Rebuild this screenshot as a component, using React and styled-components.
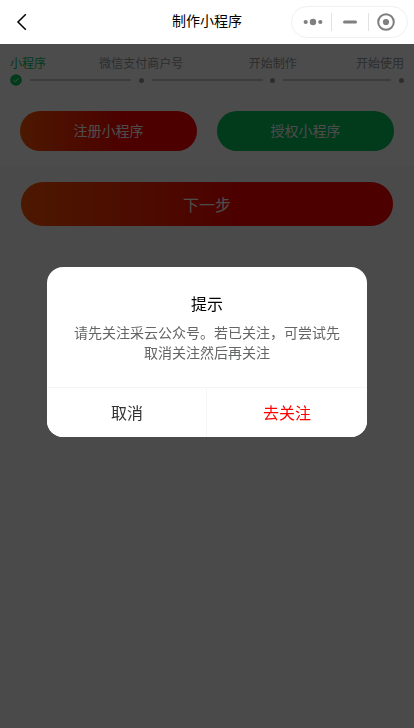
import React from "react";
import styled, { createGlobalStyle } from "styled-components";

const GlobalStyle = createGlobalStyle`
  * { box-sizing: border-box; }
  body {
    margin: 0;
    background: #f7f7f7;
    font-family: "Noto Sans CJK SC", sans-serif;
    font-weight: 400;
    overflow: hidden;
  }
  button { font-family: inherit; font-weight: inherit; border: 0; padding: 0; }
`;

const Page = styled.div`
  height: 728px;
  display: flex;
  flex-direction: column;
`;

const NavBar = styled.header`
  height: 44px;
  flex: none;
  display: grid;
  grid-template-columns: 123px 1fr 123px;
  align-items: center;
  background: #fff;
`;

const BackButton = styled.button`
  width: 24px;
  height: 24px;
  margin-left: 10px;
  background: none;
  svg { display: block; }
`;

const NavTitle = styled.h1`
  margin: 0;
  text-align: center;
  font-size: 14px;
  line-height: 20px;
  font-weight: 400;
  color: #000;
  padding-bottom: 4px;
`;

const Capsule = styled.div`
  width: 117px;
  height: 32px;
  border: 1px solid #f0f0f0;
  border-radius: 16px;
  display: grid;
  grid-template-columns: 39px 37px 39px;
  align-items: center;
`;

const CapsuleItem = styled.div`
  height: 18px;
  display: flex;
  align-items: center;
  justify-content: center;
  padding: 0 ${(p) => p.$right || 0}px 0 ${(p) => p.$left || 0}px;
  border-left: ${(p) => (p.$divided ? "1px solid #e2e2e2" : "0")};
`;

const Body = styled.main`
  flex: 1;
  background: #f7f7f7;
`;

const Panel = styled.section`
  height: 122px;
  background: #fff;
`;

const StepLabels = styled.div`
  display: flex;
  justify-content: space-between;
  padding: 11px 10px 0;
  height: 29px;
`;

const StepLabel = styled.span`
  font-size: 12px;
  line-height: 16px;
  color: ${(p) => (p.$active ? "#07c160" : "#969799")};
  margin-left: ${(p) => p.$shift || 0}px;
`;

const StepTrack = styled.div`
  display: flex;
  align-items: center;
  height: 14px;
  padding: 0 9px 0 10px;
`;

const StepDot = styled.i`
  flex: none;
  width: 5px;
  height: 5px;
  border-radius: 50%;
  background: #969799;
`;

const StepLine = styled.i`
  flex: none;
  width: ${(p) => p.$width}px;
  height: 2px;
  margin: 0 ${(p) => p.$after}px 0 ${(p) => p.$before}px;
  background: #c8c9cc;
`;

const Actions = styled.div`
  display: grid;
  grid-template-columns: 177px 177px;
  gap: 20px;
  padding: 24px 20px 0;
`;

const PillButton = styled.button`
  height: 40px;
  border-radius: 20px;
  padding-bottom: 2px;
  font-size: 14px;
  line-height: 38px;
  color: #fff;
  background: ${(p) => (p.$green ? "#07c160" : "linear-gradient(90deg, #ff5200 0%, #ff0000 62%)")};
`;

const NextButton = styled.button`
  display: block;
  width: 372px;
  height: 44px;
  margin: 16px 0 0 21px;
  border-radius: 22px;
  font-size: 16px;
  line-height: 44px;
  color: #fff;
  background: linear-gradient(90deg, #ff5200 0%, #ff0000 62%);
`;

const Overlay = styled.div`
  position: fixed;
  inset: 44px 0 0;
  background: rgba(0, 0, 0, 0.7);
`;

const Dialog = styled.div`
  position: fixed;
  top: 267px;
  left: 47px;
  width: 320px;
  height: 170px;
  border-radius: 16px;
  overflow: hidden;
  background: #fff;
  display: flex;
  flex-direction: column;
`;

const DialogTitle = styled.h2`
  margin: 0;
  padding-top: 24px;
  font-size: 16px;
  line-height: 24px;
  font-weight: 400;
  text-align: center;
  color: #000;
`;

const DialogMessage = styled.p`
  flex: 1;
  margin: 0;
  padding: 7px 24px 0;
  font-size: 14px;
  line-height: 20px;
  text-align: center;
  color: #646566;
`;

const DialogFooter = styled.div`
  height: 50px;
  display: grid;
  grid-template-columns: 1fr 1fr;
  border-top: 1px solid #f5f5f5;
`;

const DialogButton = styled.button`
  background: #fff;
  padding: 0 0 2px ${(p) => (p.$confirm ? 0 : 1)}px;
  font-size: 16px;
  line-height: 24px;
  color: ${(p) => (p.$confirm ? "#ff0000" : "#323233")};
  border-right: ${(p) => (p.$confirm ? "0" : "1px solid #f5f5f5")};
`;

export default function App() {
  return (
    <Page>
      <GlobalStyle />
      <NavBar>
        <BackButton aria-label="返回">
          <svg width="24" height="24" viewBox="0 0 24 24" fill="none" stroke="#000" strokeWidth="1.5">
            <path d="M15.8 4.2 8 12l7.8 7.8" />
          </svg>
        </BackButton>
        <NavTitle>制作小程序</NavTitle>
        <Capsule>
          <CapsuleItem $left={3}>
            <svg width="20" height="8" viewBox="0 0 20 8" fill="#7f7f7f">
              <circle cx="2.7" cy="4" r="2.1" />
              <circle cx="10" cy="4" r="3.2" />
              <circle cx="17.3" cy="4" r="2.1" />
            </svg>
          </CapsuleItem>
          <CapsuleItem $divided $right={1}>
            <svg width="14" height="4" viewBox="0 0 14 4">
              <rect y="0.5" width="14" height="3" rx="1.5" fill="#7f7f7f" />
            </svg>
          </CapsuleItem>
          <CapsuleItem $divided $right={4}>
            <svg width="18" height="18" viewBox="0 0 18 18">
              <circle cx="9" cy="9" r="7.8" fill="none" stroke="#7f7f7f" strokeWidth="2" />
              <circle cx="9" cy="9" r="3.1" fill="#7f7f7f" />
            </svg>
          </CapsuleItem>
        </Capsule>
      </NavBar>
      <Body>
        <Panel>
          <StepLabels>
            <StepLabel $active>小程序</StepLabel>
            <StepLabel>微信支付商户号</StepLabel>
            <StepLabel $shift={12}>开始制作</StepLabel>
            <StepLabel $shift={6}>开始使用</StepLabel>
          </StepLabels>
          <StepTrack>
            <svg width="12" height="12" viewBox="0 0 12 12">
              <circle cx="6" cy="6" r="5.8" fill="#07c160" />
              <path d="m3.3 6.1 1.8 1.7 3.6-3.6" fill="none" stroke="#fff" strokeWidth="0.9" />
            </svg>
            <StepLine $width={101} $before={8} $after={7.5} />
            <StepDot />
            <StepLine $width={111} $before={8} $after={7.5} />
            <StepDot />
            <StepLine $width={108} $before={8} $after={8} />
            <StepDot />
          </StepTrack>
          <Actions>
            <PillButton>注册小程序</PillButton>
            <PillButton $green>授权小程序</PillButton>
          </Actions>
        </Panel>
        <NextButton>下一步</NextButton>
      </Body>
      <Overlay />
      <Dialog role="dialog">
        <DialogTitle>提示</DialogTitle>
        <DialogMessage>请先关注采云公众号。若已关注，可尝试先取消关注然后再关注</DialogMessage>
        <DialogFooter>
          <DialogButton>取消</DialogButton>
          <DialogButton $confirm>去关注</DialogButton>
        </DialogFooter>
      </Dialog>
    </Page>
  );
}
